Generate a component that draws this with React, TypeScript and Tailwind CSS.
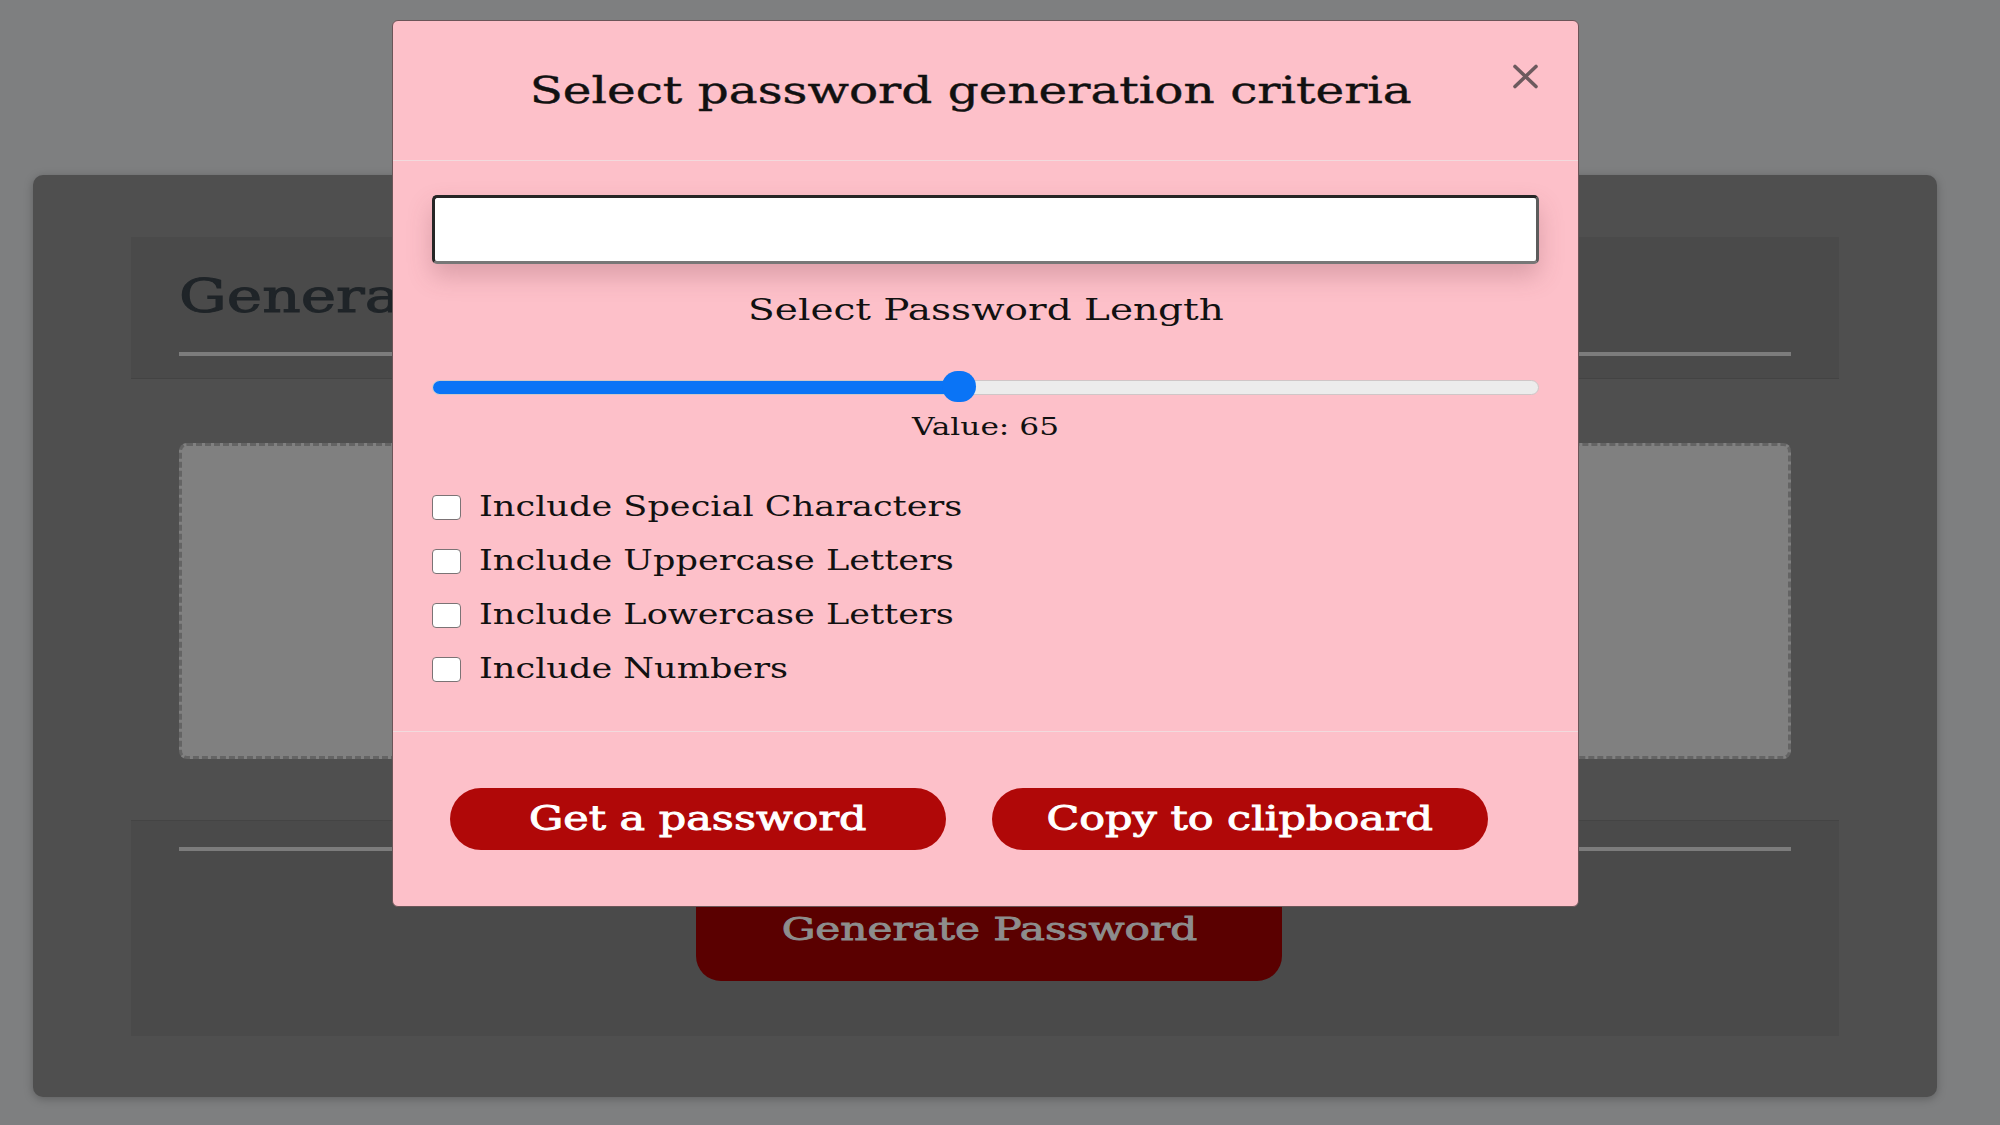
const options = [
  'Include Special Characters',
  'Include Uppercase Letters',
  'Include Lowercase Letters',
  'Include Numbers',
]

// the screenshot's type is stretched wide, so every label is scaled on x
const CriteriaModal = () => {
  return (
    <div className="fixed left-[392px] top-[20px] w-[1187px] h-[887px] bg-[#fdc0c9] rounded-[6px] border border-[#6b5558] flex flex-col">
      <div className="h-[139px] shrink-0 flex items-center pl-[53px] pr-[39px] gap-[16px]">
        <h5 className="flex-1 text-center text-[37px] leading-[44px] text-[#111] [-webkit-text-stroke:0.4px_#111]">
          <span className="inline-block scale-x-[1.31]">Select password generation criteria</span>
        </h5>
        <button className="w-[27px] h-[25px] mt-[-28px]">
          <svg width="27" height="25" viewBox="0 0 27 25">
            <path d="M3 2.5 L24 22.5 M24 2.5 L3 22.5" stroke="#6d5a5e" strokeWidth="3.6" strokeLinecap="round" />
          </svg>
        </button>
      </div>
      <div className="h-px bg-[#f2dadd]" />
      <div className="px-[39px] pt-[34px] flex flex-col h-[570px] shrink-0">
        <div className="h-[69px] bg-white rounded-[5px] border-[3px] border-t-[#262626] border-l-[#262626] border-b-[#777] border-r-[#5c5c5c] shadow-[0_12px_24px_rgba(120,60,70,0.25)]" />
        <p className="mt-[28px] text-center text-[30px] leading-[36px] text-[#111]">
          <span className="inline-block scale-x-[1.3]">Select Password Length</span>
        </p>
        <div className="mt-[43px] relative h-[32px] flex items-center">
          <div className="w-full h-[15px] rounded-full bg-[#ececec] border border-[#cfc6c7] overflow-hidden">
            <div className="h-full w-[47.6%] bg-[#0a74f6]" />
          </div>
          <div className="absolute left-[510px] top-0 w-[34px] h-[31px] rounded-full bg-[#0a74f6]" />
        </div>
        <p className="mt-[10px] text-center text-[24px] leading-[28px] text-[#111]">
          <span className="inline-block scale-x-[1.3]">Value: 65</span>
        </p>
        <div className="mt-[48px] flex flex-col gap-[18px]">
          {options.map((label) => (
            <label key={label} className="flex items-center gap-[18px] h-[36px]">
              <span className="w-[29px] h-[25px] bg-white rounded-[4px] border border-[#7b7375] shrink-0" />
              <span className="inline-block origin-left scale-x-[1.3] text-[27px] leading-[36px] text-[#111] whitespace-nowrap">
                {label}
              </span>
            </label>
          ))}
        </div>
      </div>
      <div className="h-px bg-[#f2dadd]" />
      <div className="flex-1 flex items-start pt-[56px] pl-[57px] gap-[46px]">
        <button className="w-[496px] h-[62px] rounded-full bg-[#b00808] text-white text-[33px] leading-[40px]">
          <span className="inline-block scale-x-[1.3] [-webkit-text-stroke:0.9px_#fff]">Get a password</span>
        </button>
        <button className="w-[496px] h-[62px] rounded-full bg-[#b00808] text-white text-[33px] leading-[40px]">
          <span className="inline-block scale-x-[1.3] [-webkit-text-stroke:0.9px_#fff]">Copy to clipboard</span>
        </button>
      </div>
    </div>
  )
}

export default function App() {
  return (
    <div className="min-h-screen w-full bg-[#7e7f80] font-['DejaVu_Serif',serif] overflow-hidden">
      <div className="pt-[175px] pl-[33px] pb-[28px]">
        <div className="w-[1904px] h-[922px] bg-[#4f4f4f] rounded-[10px] shadow-[0_2px_10px_rgba(0,0,0,0.25)] px-[98px] pt-[62px] flex flex-col">
          <div className="h-[142px] bg-[#4a4a4a] border-b border-[#434343] px-[48px] pt-[31px]">
            <h2 className="text-[46px] leading-[56px] text-[#1f2428] [-webkit-text-stroke:1px_#1f2428]">
              <span className="inline-block origin-left scale-x-[1.3] whitespace-nowrap">Generate a Password</span>
            </h2>
            <div className="mt-[28px] h-[4px] bg-[#7c7c7c]" />
          </div>
          <div className="px-[48px] pt-[64px]">
            <div className="h-[316px] bg-[#808080] rounded-[8px] border-[3px] border-dashed border-[#646464]" />
          </div>
          <div className="mt-[61px] h-[216px] bg-[#4a4a4a] border-t border-[#444] px-[48px] pt-[26px] flex flex-col items-center">
            <div className="w-full h-[4px] bg-[#7c7c7c]" />
            <button className="mt-[26px] ml-[8px] w-[586px] h-[104px] rounded-[25px] bg-[#5a0000] text-[#8d8d8d] text-[32px] leading-[40px]">
              <span className="inline-block scale-x-[1.32] [-webkit-text-stroke:0.9px_#8d8d8d]">Generate Password</span>
            </button>
          </div>
        </div>
      </div>
      <CriteriaModal />
    </div>
  )
}
